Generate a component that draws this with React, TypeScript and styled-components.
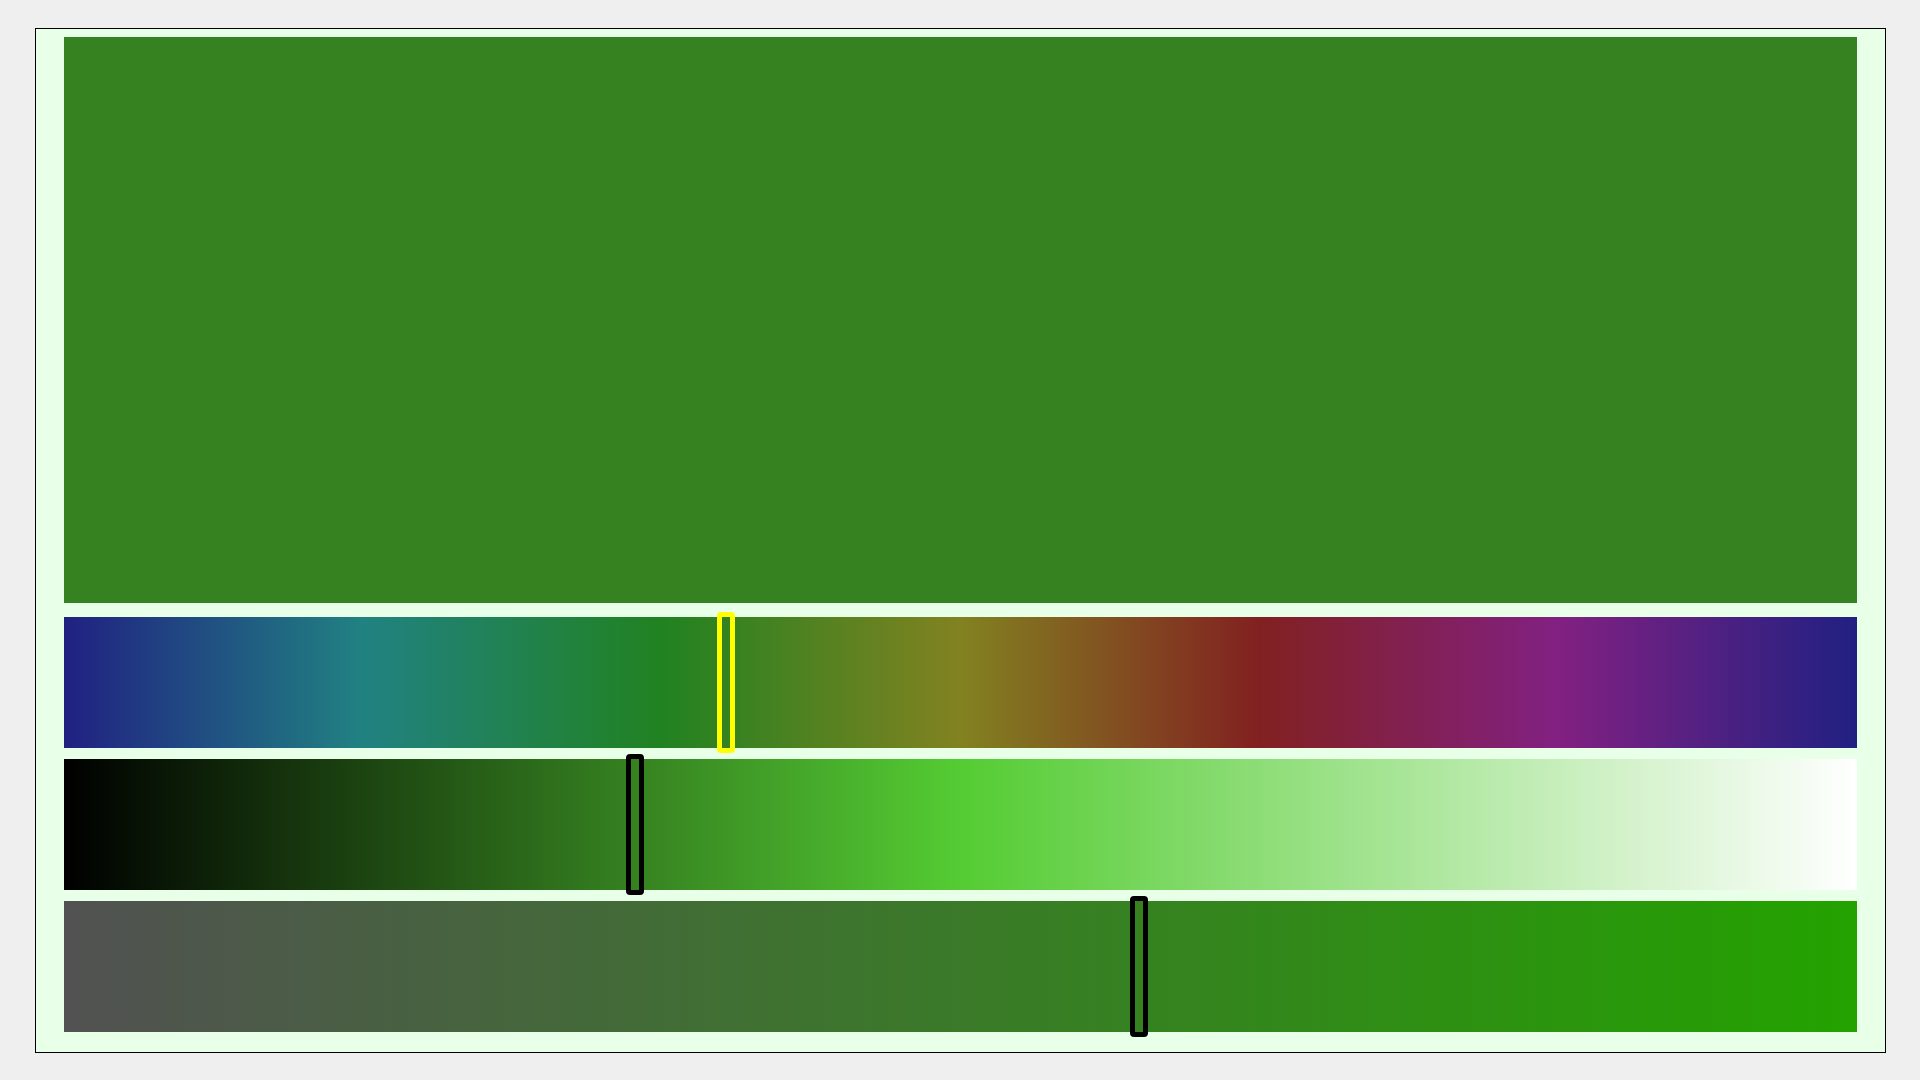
import { createGlobalStyle } from "styled-components";
import styled from "styled-components";

const HUE = 107;
const SAT = 0.6;
const LIGHT = 0.318;

const hsl = (h: number, s: number, l: number) =>
  `hsl(${((h % 360) + 360) % 360}, ${(s * 100).toFixed(2)}%, ${(l * 100).toFixed(2)}%)`;

const stops = (n: number, fn: (t: number) => string) =>
  `linear-gradient(to right, ${Array.from({ length: n + 1 }, (_, i) => fn(i / n)).join(", ")})`;

const bars = [
  {
    key: "hue",
    gradient: stops(72, (t) => hsl(240 - 360 * t, SAT, LIGHT)),
    value: 0.3692,
    active: true,
  },
  {
    key: "light",
    gradient: stops(40, (t) => hsl(HUE, SAT, t)),
    value: 0.3185,
    active: false,
  },
  {
    key: "sat",
    gradient: stops(20, (t) => hsl(HUE, t, LIGHT)),
    value: 0.5996,
    active: false,
  },
];

export default function App() {
  return (
    <>
      <GlobalStyle />
      <Frame>
        <Preview $color={hsl(HUE, SAT, LIGHT)} />
        <Sliders>
          {bars.map((bar) => (
            <Bar key={bar.key} $gradient={bar.gradient}>
              <Thumb $active={bar.active} style={{ left: `calc(${bar.value * 100}% - 9px)` }} />
            </Bar>
          ))}
        </Sliders>
      </Frame>
    </>
  );
}

const GlobalStyle = createGlobalStyle`
  html, body {
    margin: 0;
    padding: 0;
    background: #efefef;
    font-family: "Liberation Sans", Arial, sans-serif;
  }
  body {
    padding: 28px 0 0 35px;
  }
`;

const Frame = styled.main`
  display: flex;
  flex-direction: column;
  box-sizing: border-box;
  width: 1851px;
  height: 1025px;
  padding: 8px 28px 20px;
  border: 1px solid #000;
  background: #e8ffe8;
`;

const Preview = styled.div<{ $color: string }>`
  height: 566px;
  background: ${({ $color }) => $color};
`;

const Sliders = styled.div`
  display: flex;
  flex-direction: column;
  gap: 11px;
  margin-top: 14px;
`;

const Bar = styled.div<{ $gradient: string }>`
  position: relative;
  height: 131px;
  background: ${({ $gradient }) => $gradient};
`;

const Thumb = styled.div<{ $active: boolean }>`
  position: absolute;
  top: -5px;
  box-sizing: border-box;
  width: 18px;
  height: 141px;
  border: 5px solid ${({ $active }) => ($active ? "#ffff00" : "#000")};
  border-radius: 4px;
`;
